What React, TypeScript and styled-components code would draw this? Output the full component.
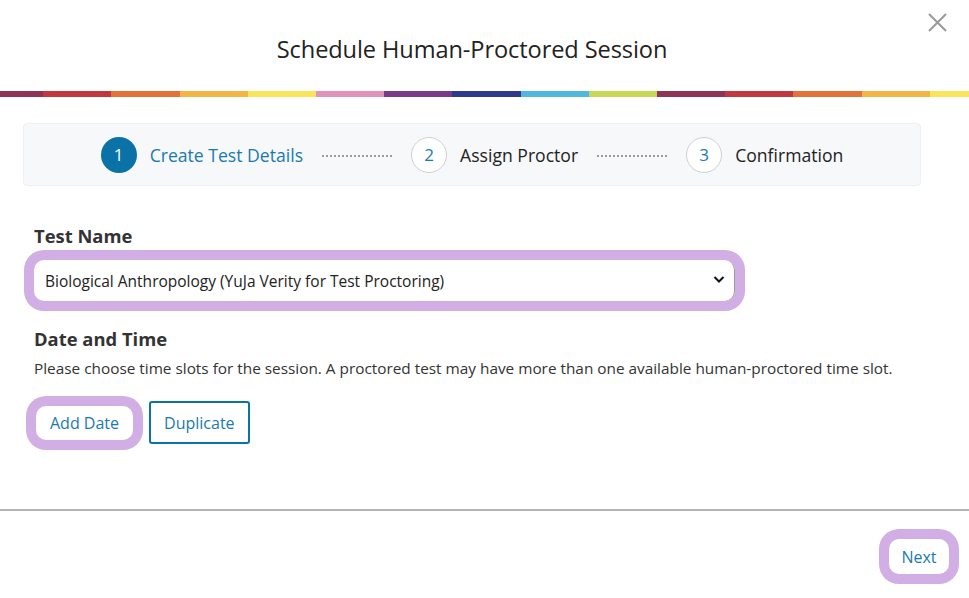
import React from "react";
import styled, { createGlobalStyle } from "styled-components";

const GlobalStyle = createGlobalStyle`
  html, body {
    margin: 0;
    padding: 0;
    background: #ffffff;
  }
  body {
    font-family: "Open Sans", "Noto Sans", "Liberation Sans", sans-serif;
    color: #222;
  }
`;

const Modal = styled.div`
  width: 969px;
  height: 598px;
  background: #fff;
  display: flex;
  flex-direction: column;
  overflow: hidden;
`;

const Header = styled.header`
  position: relative;
  height: 91px;
  display: flex;
  align-items: center;
  justify-content: center;
  padding-right: 25px;
`;

const Title = styled.h1`
  margin: 6px 0 0;
  font-size: 23.6px;
  font-weight: 400;
  color: #222;
  letter-spacing: -0.1px;
`;

const CloseButton = styled.button`
  position: absolute;
  top: 12px;
  right: 22px;
  width: 20px;
  height: 20px;
  padding: 0;
  border: none;
  background: none;
  cursor: pointer;
  display: flex;
  align-items: center;
  justify-content: center;
`;

const colors = [
  "#8e3457",
  "#c1393f",
  "#e1733b",
  "#f4b545",
  "#f9e45b",
  "#e393bb",
  "#7b3a89",
  "#2e3a8b",
  "#50b7de",
  "#c9d757",
];

const stops = colors
  .map((c, i) => `${c} ${i * 10}%, ${c} ${(i + 1) * 10}%`)
  .join(", ");

const ColorBar = styled.div`
  height: 6px;
  background-image: linear-gradient(to right, ${stops});
  background-size: 682px 100%;
  background-position: -25px 0;
  background-repeat: repeat-x;
`;

const Body = styled.main`
  flex: 1;
  padding: 26px 48px 0 23px;
`;

const Stepper = styled.ol`
  margin: 0;
  padding: 0;
  list-style: none;
  height: 63px;
  box-sizing: border-box;
  background: #f7f8fa;
  border: 1px solid #eef0f3;
  border-radius: 4px;
  display: flex;
  align-items: center;
  justify-content: center;
`;

const Step = styled.li`
  display: flex;
  align-items: center;
  gap: 13px;
`;

const StepCircle = styled.span<{ $active?: boolean }>`
  width: 36px;
  height: 36px;
  box-sizing: border-box;
  border-radius: 50%;
  display: flex;
  align-items: center;
  justify-content: center;
  font-size: 17px;
  background: ${({ $active }) => ($active ? "#0a72a6" : "#fff")};
  color: ${({ $active }) => ($active ? "#fff" : "#1a7ab0")};
  border: ${({ $active }) => ($active ? "none" : "1px solid #cfcfcf")};
`;

const StepLabel = styled.span<{ $active?: boolean }>`
  font-size: 17.6px;
  color: ${({ $active }) => ($active ? "#1a7ab0" : "#222")};
`;

const Dots = styled.span`
  width: 70px;
  height: 0;
  border-top: 2px dotted #9c9c9c;
  margin: 2px 19px 0;
`;

const Form = styled.section`
  padding: 38px 0 0 11px;
`;

const Label = styled.h2`
  margin: 0;
  font-size: 18.4px;
  line-height: 24px;
  font-weight: 700;
  color: #333;
`;

const SelectWrap = styled.div`
  position: relative;
  width: 701px;
  height: 41px;
  margin-top: 12px;
  border-radius: 10px;
  box-shadow: 0 0 0 10px #d1aee3;
  background: #fff;
`;

const Select = styled.select`
  width: 100%;
  height: 100%;
  appearance: none;
  border: none;
  border-right: 1px solid #9a9a9a;
  border-radius: 10px;
  background: transparent;
  padding: 0 30px 0 11px;
  font-family: inherit;
  font-size: 15.5px;
  color: #222;
  outline: none;
`;

const Chevron = styled.svg`
  position: absolute;
  right: 10px;
  top: 15px;
  pointer-events: none;
`;

const SubHint = styled.p`
  margin: 7px 0 0;
  font-size: 15.35px;
  line-height: 20px;
  color: #333;
`;

const Buttons = styled.div`
  display: flex;
  align-items: center;
  gap: 16px;
  margin-top: 23px;
  padding-left: 2px;
`;

const Button = styled.button<{ $highlight?: boolean }>`
  font-family: inherit;
  font-size: 16px;
  color: #1a7ab0;
  background: #fff;
  cursor: pointer;
  box-sizing: border-box;
  height: ${({ $highlight }) => ($highlight ? "34px" : "43px")};
  padding: 0 ${({ $highlight }) => ($highlight ? "14px" : "13px")};
  border-radius: ${({ $highlight }) => ($highlight ? "10px" : "3px")};
  border: ${({ $highlight }) => ($highlight ? "none" : "2px solid #0a72a6")};
  box-shadow: ${({ $highlight }) => ($highlight ? "0 0 0 10px #d1aee3" : "none")};
`;

const Section = styled.div<{ $top: number }>`
  margin-top: ${({ $top }) => $top}px;
`;

const Footer = styled.footer`
  height: 89px;
  border-top: 2px solid #b3b3b3;
  display: flex;
  justify-content: flex-end;
  align-items: flex-start;
  padding: 28px 20px 0 0;
  box-sizing: border-box;
`;

const NextButton = styled(Button)`
  width: 60px;
  height: 35px;
  padding: 0;
`;

const steps = ["Create Test Details", "Assign Proctor", "Confirmation"];

export default function App() {
  return (
    <>
      <GlobalStyle />
      <Modal>
        <Header>
          <Title>Schedule Human-Proctored Session</Title>
          <CloseButton aria-label="Close">
            <svg width="19" height="19" viewBox="0 0 19 19">
              <path d="M1 1L18 18M18 1L1 18" stroke="#999" strokeWidth="2" />
            </svg>
          </CloseButton>
        </Header>
        <ColorBar />
        <Body>
          <Stepper>
            {steps.map((s, i) => (
              <React.Fragment key={s}>
                {i > 0 && <Dots />}
                <Step>
                  <StepCircle $active={i === 0}>{i + 1}</StepCircle>
                  <StepLabel $active={i === 0}>{s}</StepLabel>
                </Step>
              </React.Fragment>
            ))}
          </Stepper>
          <Form>
            <Label>Test Name</Label>
            <SelectWrap>
              <Select defaultValue="bio">
                <option value="bio">
                  Biological Anthropology (YuJa Verity for Test Proctoring)
                </option>
              </Select>
              <Chevron width="12" height="9" viewBox="0 0 12 9">
                <path d="M1.5 2L6 6.5L10.5 2" fill="none" stroke="#111" strokeWidth="2" />
              </Chevron>
            </SelectWrap>
            <Section $top={26}>
              <Label>Date and Time</Label>
              <SubHint>
                Please choose time slots for the session. A proctored test may have more than one
                available human-proctored time slot.
              </SubHint>
            </Section>
            <Buttons>
              <Button $highlight>Add Date</Button>
              <Button>Duplicate</Button>
            </Buttons>
          </Form>
        </Body>
        <Footer>
          <NextButton $highlight>Next</NextButton>
        </Footer>
      </Modal>
    </>
  );
}
